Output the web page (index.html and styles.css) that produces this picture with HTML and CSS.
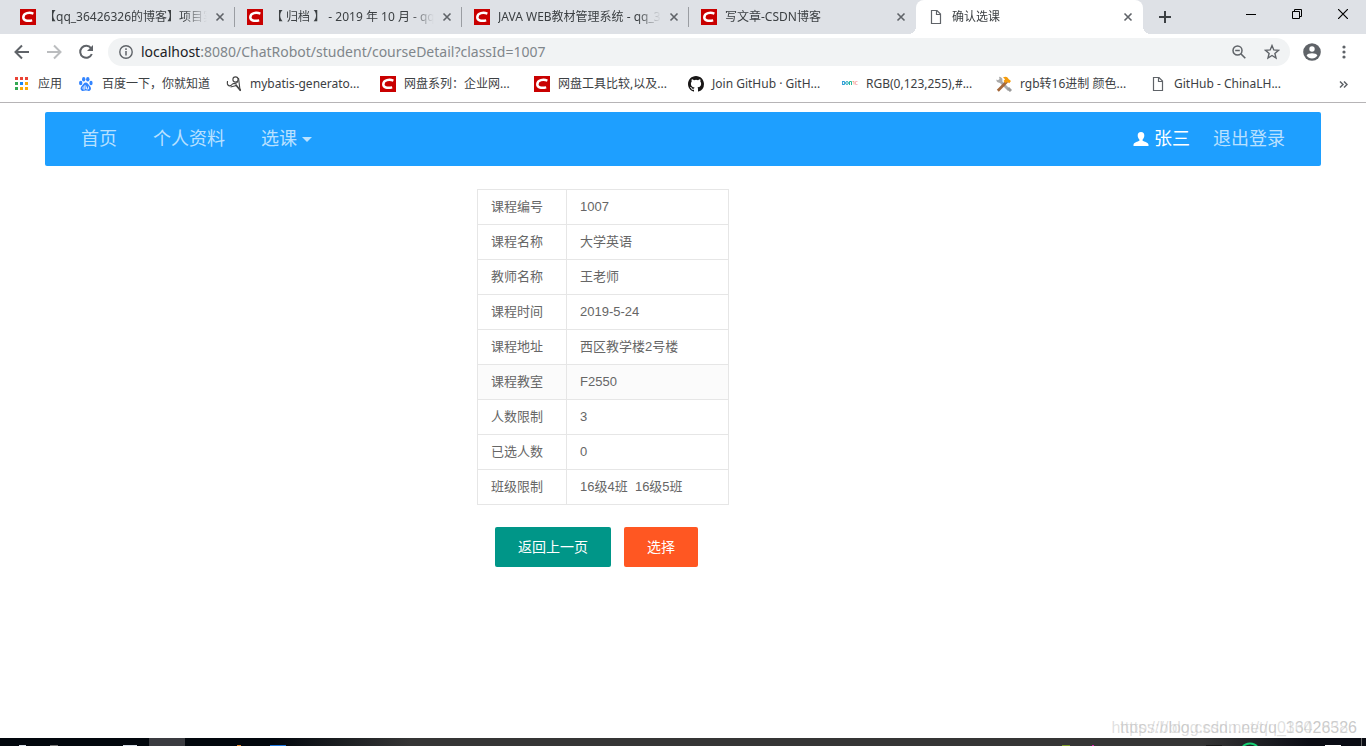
FILE: index.html
```
<!DOCTYPE html>
<html lang="zh-CN">
<head>
<meta charset="utf-8">
<title>确认选课</title>
<link rel="stylesheet" href="styles.css">
</head>
<body>
<svg class="defs" aria-hidden="true">
  <symbol id="csdn" viewBox="0 0 16 16"><rect width="16" height="16" fill="#c90000"/><path d="M13.400 4.600C9.500 3.200 3.600 3.600 3.300 8.200c-.1 3.500 4 4.300 8.900 3.200" fill="none" stroke="#fff" stroke-width="2.500"/></symbol>
  <symbol id="doc" viewBox="0 0 16 16"><path d="M3.500 1.500h5.500l3.500 3.500v9.500h-9zM8.500 1.500v4h4" fill="none" stroke="#5f6368" stroke-width="1.200"/></symbol>
  <symbol id="close" viewBox="0 0 10 10"><path d="M1.500 1.500l7 7M8.500 1.500l-7 7" stroke="#5f6368" stroke-width="1.600"/></symbol>
</svg>

<header class="browser">
  <div class="tabstrip">
    <div class="tab"><svg class="ico"><use href="#csdn"/></svg><span class="title">【qq_36426326的博客】项目实战</span><button class="x" aria-label="关闭"><svg><use href="#close"/></svg></button></div>
    <div class="tab"><svg class="ico"><use href="#csdn"/></svg><span class="title">【 归档 】 - 2019 年 10 月 - qq_36</span><button class="x" aria-label="关闭"><svg><use href="#close"/></svg></button></div>
    <div class="tab"><svg class="ico"><use href="#csdn"/></svg><span class="title">JAVA WEB教材管理系统 - qq_36426</span><button class="x" aria-label="关闭"><svg><use href="#close"/></svg></button></div>
    <div class="tab last"><svg class="ico"><use href="#csdn"/></svg><span class="title">写文章-CSDN博客</span><button class="x" aria-label="关闭"><svg><use href="#close"/></svg></button></div>
    <div class="tab active"><svg class="ico"><use href="#doc"/></svg><span class="title">确认选课</span><button class="x" aria-label="关闭"><svg><use href="#close"/></svg></button></div>
    <button class="newtab" aria-label="新标签页"><svg width="12" height="12" viewBox="0 0 12 12"><path d="M6 0v12M0 6h12" stroke="#3c4043" stroke-width="2"/></svg></button>
    <div class="winctl">
      <button aria-label="最小化"><svg width="10" height="10"><path d="M0 5.500h10" stroke="#000"/></svg></button>
      <button aria-label="还原"><svg width="10" height="10"><path d="M.5 2.500h7v7h-7zM2.500 2.500v-2h7v7h-2" fill="none" stroke="#000"/></svg></button>
      <button aria-label="关闭窗口"><svg width="10" height="10"><path d="M0 0l10 10M10 0L0 10" stroke="#000" stroke-width="1.200"/></svg></button>
    </div>
  </div>

  <div class="toolbar">
    <button class="tool" aria-label="后退"><svg width="16" height="16" viewBox="0 0 16 16"><path d="M15 8H2M8 1.500L1.500 8 8 14.500" fill="none" stroke="#5f6368" stroke-width="2"/></svg></button>
    <button class="tool" aria-label="前进"><svg width="16" height="16" viewBox="0 0 16 16"><path d="M1 8h13M8 1.500L14.500 8 8 14.500" fill="none" stroke="#bbbdbf" stroke-width="2"/></svg></button>
    <button class="tool" aria-label="刷新"><svg width="16" height="16" viewBox="0 0 16 16"><path d="M13 4.200A6 6 0 1 0 13.800 10" fill="none" stroke="#5f6368" stroke-width="2"/><path d="M15 1v6H9z" fill="#5f6368"/></svg></button>
    <div class="omnibox">
      <svg width="14" height="14" viewBox="0 0 14 14"><circle cx="7" cy="7" r="6.200" fill="none" stroke="#5f6368" stroke-width="1.400"/><path d="M7 6v4.500M7 3.300v1.600" stroke="#5f6368" stroke-width="1.500"/></svg>
      <div class="url"><b>localhost</b>:8080/ChatRobot/student/courseDetail?classId=1007</div>
      <svg class="lens" width="14" height="14" viewBox="0 0 14 14"><circle cx="5.500" cy="5.500" r="4.500" fill="none" stroke="#5f6368" stroke-width="1.500"/><path d="M3.200 5.500h4.600M8.800 8.800l4.500 4.500" stroke="#5f6368" stroke-width="1.600"/></svg>
      <svg width="16" height="16" viewBox="0 0 16 16"><path d="M8 1.600l1.800 4.300 4.700.4-3.600 3.100 1.100 4.600L8 11.500 4 14l1.100-4.600L1.500 6.300l4.700-.4z" fill="none" stroke="#5f6368" stroke-width="1.400"/></svg>
    </div>
    <button class="tool profile" aria-label="个人资料"><svg width="18" height="18" viewBox="0 0 18 18"><circle cx="9" cy="9" r="8.800" fill="#5f6368"/><circle cx="9" cy="6" r="2.700" fill="#fff"/><path d="M3.600 12.600c1-3 9.800-3 10.800 0a6.500 6.500 0 0 1-10.800 0z" fill="#fff"/></svg></button>
    <button class="tool more" aria-label="菜单"><svg width="4" height="14" viewBox="0 0 4 14"><g fill="#5f6368"><circle cx="2" cy="2" r="1.600"/><circle cx="2" cy="7" r="1.600"/><circle cx="2" cy="12" r="1.600"/></g></svg></button>
  </div>

  <nav class="bookmarks">
    <a href="#" class="apps"><svg class="ico" viewBox="0 0 16 16"><path d="M1 1h3v3H1zM6 1h3v3H6zM11 1h3v3h-3z" fill="#ea4335"/><path d="M1 6h3v3H1z" fill="#34a853"/><path d="M6 6h3v3H6z" fill="#1a87f4"/><path d="M11 6h3v3h-3zM6 11h3v3H6zM11 11h3v3h-3z" fill="#fbab05"/><path d="M1 11h3v3H1z" fill="#34a853"/></svg>应用</a>
    <a href="#" class="baidu"><svg class="ico" viewBox="0 0 16 16"><g fill="#3385ff"><ellipse cx="2.700" cy="7" rx="1.700" ry="2.200"/><ellipse cx="5.700" cy="3.200" rx="1.700" ry="2.300"/><ellipse cx="9.800" cy="3.200" rx="1.700" ry="2.300"/><ellipse cx="13" cy="7" rx="1.600" ry="2.200"/><path d="M7.800 6.500c2 0 2.500 2 4 3.400 2.200 2.200 1.100 5-1.300 5-1 0-1.500-.3-2.700-.3s-1.700.3-2.700.3c-2.400 0-3.500-2.800-1.300-5 1.500-1.400 2-3.400 4-3.400z"/></g><path d="M7 9v4H5.500c-1 0-1-2 0-2H7M8.500 10.500V13h2v-2.500" fill="none" stroke="#fff" stroke-width=".8"/></svg>百度一下，你就知道</a>
    <a href="#"><svg class="ico" viewBox="0 0 16 16"><g fill="none" stroke="#444" stroke-width="1.100"><path d="M1.500 5c-1 5 2.500 6.500 5.500 2.500"/><circle cx="9.500" cy="3.500" r="2.600"/><path d="M12.500 2c.8 4 .6 9 2 13"/><path d="M7 7.500c2 .5 4-.5 5-2M4.500 11l6-1.500"/><path d="M9.500 8.500l5 6" stroke-width="1.800"/></g></svg>mybatis-generato...</a>
    <a href="#"><svg class="ico"><use href="#csdn"/></svg>网盘系列：企业网...</a>
    <a href="#"><svg class="ico"><use href="#csdn"/></svg>网盘工具比较,以及...</a>
    <a href="#"><svg class="ico" viewBox="0 0 16 16"><path fill="#191717" d="M8 0C3.580 0 0 3.580 0 8c0 3.540 2.290 6.530 5.470 7.590.4.070.55-.17.55-.38 0-.19-.01-.82-.01-1.490-2.010.37-2.530-.49-2.690-.94-.09-.23-.48-.94-.82-1.130-.28-.15-.68-.52-.01-.53.63-.01 1.080.58 1.230.82.72 1.210 1.870.87 2.330.66.07-.52.28-.87.51-1.070-1.780-.2-3.640-.89-3.640-3.950 0-.87.31-1.590.82-2.150-.08-.2-.36-1.020.08-2.120 0 0 .67-.21 2.200.82a7.600 7.600 0 0 1 4 0c1.530-1.040 2.200-.82 2.200-.82.44 1.100.16 1.920.08 2.120.51.56.82 1.270.82 2.150 0 3.070-1.870 3.750-3.650 3.950.29.25.54.73.54 1.480 0 1.070-.01 1.930-.01 2.200 0 .21.15.46.55.38A8.010 8.010 0 0 0 16 8c0-4.420-3.580-8-8-8z"/></svg>Join GitHub · GitH...</a>
    <a href="#"><svg class="ico" viewBox="0 0 16 16"><g fill="none" stroke-width="1"><path d="M.6 5v4M.6 5.500h2v3h-2" stroke="#2a9bd8"/><circle cx="5" cy="7" r="1.400" stroke="#23a8c0"/><path d="M7.500 9V5.500h2V9" stroke="#27b89a"/><path d="M10.500 5.500h1.500v3" stroke="#f5a58a"/><path d="M15.500 5.500h-2v3h2" stroke="#f7b7bd"/></g></svg>RGB(0,123,255),#...</a>
    <a href="#"><svg class="ico" viewBox="0 0 16 16"><path d="M4 5l9 9" stroke="#aaa" stroke-width="2.800"/><path d="M3 .8L3.500 3 2 4.300.3 3.500C.3 7 4 7.500 5.800 5.800S6 .8 3 .8z" fill="#aaa"/><path d="M11 5.500L1.800 14.700" stroke="#a4683a" stroke-width="2.800"/><path d="M7 1.500c3-2 5 0 5.500 1.500l2.500 2-1.800 2.300-2-1.500-1.400 1.400-2.300-2.200 1.600-1.700z" fill="#f49b0b"/><path d="M12 12l3 3" stroke="#999" stroke-width="3"/></svg>rgb转16进制 颜色...</a>
    <a href="#"><svg class="ico"><use href="#doc"/></svg>GitHub - ChinaLH...</a>
    <button class="overflow" aria-label="更多书签"><svg width="9" height="7" viewBox="0 0 9 7"><path d="M1 .5l3 3-3 3M5 .5l3 3-3 3" fill="none" stroke="#5f6368" stroke-width="1.500"/></svg></button>
  </nav>
</header>

<main class="page">
  <nav class="navbar">
    <a href="#">首页</a>
    <a href="#">个人资料</a>
    <a href="#" class="drop">选课<span class="caret"></span></a>
    <div class="account">
      <a href="#" class="user"><svg width="16" height="16" viewBox="0 0 16 16"><path d="M8 1c2.300 0 3.300 1.500 3.300 3.500 0 1.800-.8 3.200-1.700 4v1.300c1.500 1 5.900 1.600 5.900 4V15H.5v-1.200c0-2.400 4.400-3 5.900-4V8.500c-.9-.8-1.700-2.200-1.700-4C4.700 2.500 5.700 1 8 1z" fill="#fff"/></svg>张三</a>
      <a href="#">退出登录</a>
    </div>
  </nav>

  <section class="detail">
    <table class="course">
      <tr><th scope="row">课程编号</th><td>1007</td></tr>
      <tr><th scope="row">课程名称</th><td>大学英语</td></tr>
      <tr><th scope="row">教师名称</th><td>王老师</td></tr>
      <tr><th scope="row">课程时间</th><td>2019-5-24</td></tr>
      <tr><th scope="row">课程地址</th><td>西区教学楼2号楼</td></tr>
      <tr class="hover"><th scope="row">课程教室</th><td>F2550</td></tr>
      <tr><th scope="row">人数限制</th><td>3</td></tr>
      <tr><th scope="row">已选人数</th><td>0</td></tr>
      <tr><th scope="row">班级限制</th><td>16级4班&nbsp; 16级5班</td></tr>
    </table>
    <div class="actions">
      <button class="btn back">返回上一页</button>
      <button class="btn pick">选择</button>
    </div>
  </section>
</main>

<footer class="taskbar">
  <svg width="290" height="8" viewBox="0 0 290 8"><path d="M149 0h36v8h-36z" fill="#3a3b40"/><path d="M19 7h7v1h-7zM123 7h14v1h-14z" fill="#d5dce6"/><path d="M50 7h8v1h-8z" fill="#777"/><path d="M237 7h4v1h-4z" fill="#e88a30"/><path d="M270 7h16v1h-16z" fill="#1e78e0"/></svg>
  <svg width="310" height="8" viewBox="0 0 310 8"><path d="M6 7h8v1H6z" fill="#7d9a28"/><path d="M36 7h2v1h-2z" fill="#e020b0"/><path d="M150 7h16v1h-16z" fill="#171717"/><path d="M186 10c3-6 13-6 16 0" fill="none" stroke="#15cf72" stroke-width="2"/><path d="M269 7h16v1h-16z" fill="#fff"/><path d="M305.500 0v8" stroke="#666"/></svg>
</footer>
<div class="mark">https://blog.csdn.net/qq_36426326</div>
<div class="mark">https://blog.csdn.net/u013028586</div>
</body>
</html>
```
FILE: styles.css
```
* { box-sizing: border-box; }
body {
  margin: 0;
  min-height: 100vh;
  display: flex;
  flex-direction: column;
  background: #fff;
  font-family: "Noto Sans", "Noto Sans CJK SC", sans-serif;
  font-size: 12px;
  color: #3c4043;
}
a { color: inherit; text-decoration: none; }
button { border: 0; padding: 0; background: none; font: inherit; color: inherit; cursor: pointer; }
svg { display: block; flex: none; }
.defs { position: absolute; width: 0; height: 0; }
.ico { width: 16px; height: 16px; }

/* Tabs */
.browser { border-bottom: 1px solid #b6b4b6; }
.tabstrip { display: flex; height: 34px; background: #dee1e6; padding-left: 8px; }
.tab {
  flex: 0 1 227px;
  min-width: 0;
  display: flex;
  align-items: center;
  gap: 8px;
  padding: 0 10px 0 12px;
  background: linear-gradient(#9a9da2, #9a9da2) right center / 1px 20px no-repeat;
}
.tab.last { background: none; }
.tab.active { position: relative; background: #fff; border-radius: 8px 8px 0 0; }
.tab.active::before, .tab.active::after {
  content: "";
  position: absolute;
  bottom: 0;
  width: 8px;
  height: 8px;
}
.tab.active::before { left: -8px; background: radial-gradient(circle at 0 0, #dee1e6 8px, #fff 8px); }
.tab.active::after { right: -8px; background: radial-gradient(circle at 100% 0, #dee1e6 8px, #fff 8px); }
.title {
  flex: 1;
  min-width: 0;
  overflow: hidden;
  white-space: nowrap;
  line-height: 20px;
  mask-image: linear-gradient(to right, #000 calc(100% - 24px), transparent);
}
.x svg { width: 10px; height: 10px; }
.newtab { width: 28px; margin-left: 8px; display: grid; place-items: center; }
.winctl { display: flex; margin-left: auto; height: 28px; }
.winctl button { width: 46px; display: grid; place-items: center; }

/* Toolbar */
.toolbar { display: flex; align-items: center; height: 36px; padding: 0 6px; }
.tool { width: 32px; height: 32px; display: grid; place-items: center; }
.profile { margin-left: 6px; }
.omnibox {
  flex: 1;
  display: flex;
  align-items: center;
  gap: 8px;
  height: 28px;
  margin-left: 6px;
  padding: 0 10px 0 11px;
  border-radius: 14px;
  background: #f1f3f4;
}
.url { flex: 1; font-size: 14px; line-height: 20px; color: #80868b; }
.url b { font-weight: 400; color: #202124; }
.lens { margin-right: 10px; }

/* Bookmarks */
.bookmarks { display: flex; align-items: center; height: 32px; padding: 0 18px 4px 14px; line-height: 20px; }
.bookmarks a {
  flex: 0 1 154px;
  display: flex;
  align-items: center;
  gap: 8px;
  white-space: nowrap;
}
.bookmarks a.apps { flex-basis: 64px; }
.bookmarks a.baidu { flex-basis: 148px; }
.overflow { margin-left: auto; }

/* Page */
.page { flex: 1; padding: 9px 45px 0; font-family: "Liberation Sans", "Noto Sans CJK SC", sans-serif; }
.navbar {
  display: flex;
  align-items: center;
  height: 54px;
  padding: 0 18px;
  border-radius: 2px;
  background: #1e9fff;
  color: rgba(255, 255, 255, .7);
  font-size: 18px;
  line-height: 54px;
}
.navbar > a { padding: 0 18px; }
.drop { display: flex; align-items: center; gap: 5px; }
.caret {
  border: 5px solid transparent;
  border-top-color: rgba(255, 255, 255, .7);
  border-bottom: 0;
}
.account { display: flex; gap: 23px; margin-left: auto; padding-right: 18px; }
.user { display: flex; align-items: center; gap: 5px; color: #fff; }
.detail { margin: 23px 0 0 calc(50% - 206px); }
.course {
  width: 252px;
  border-collapse: collapse;
  font-size: 13px;
  line-height: 20px;
  color: #666;
}
.course th, .course td {
  height: 35px;
  padding: 0 13px;
  border: 1px solid #e6e6e6;
  font-weight: 400;
  text-align: left;
}
.course th { width: 89px; }
.hover { background: #fbfbfb; }
.actions { display: flex; gap: 13px; margin: 22px 0 0 18px; }
.btn {
  height: 40px;
  padding: 0 23px 2px;
  border-radius: 2px;
  color: #fff;
  font-size: 14px;
}
.back { background: #009688; }
.pick { background: #ff5722; }

/* Desktop taskbar and watermark */
.taskbar {
  display: flex;
  justify-content: space-between;
  height: 8px;
  overflow: hidden;
  background: linear-gradient(to right, #02070d 20%, #353535 30%, #353535 88%, #0a0c14 96%);
}
.mark {
  position: absolute;
  right: 9px;
  bottom: 7px;
  font: 16px/22px "Liberation Sans", sans-serif;
  color: rgba(150, 150, 150, .3);
}
```
